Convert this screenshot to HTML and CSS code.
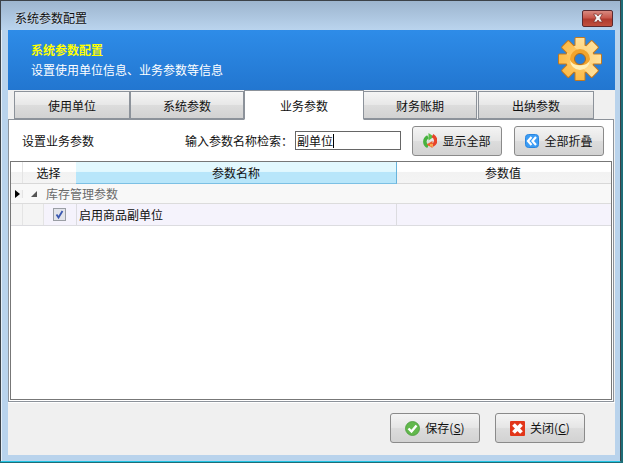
FILE: index.html
```html
<!DOCTYPE html>
<html lang="zh">
<head>
<meta charset="utf-8">
<title>系统参数配置</title>
<link rel="stylesheet" href="styles.css">
</head>
<body>
<div class="window">
  <div class="titlebar">
    <span class="title-text">系统参数配置</span>
    <div class="close-btn">
      <svg width="16" height="10" viewBox="0 0 16 10"><path d="M3.500 1h3L8 3l1.500-2h3L10 5l2.500 4h-3L8 7 6.500 9h-3L6 5z" fill="#f2f2f2" stroke="#7a2a22" stroke-width=".7"/></svg>
    </div>
  </div>
  <div class="client">
    <header class="banner">
      <div class="banner-text">
        <div class="banner-title">系统参数配置</div>
        <div class="banner-sub">设置使用单位信息、业务参数等信息</div>
      </div>
      <svg class="gear" width="44" height="44" viewBox="0 0 44 44">
        <defs>
          <linearGradient id="gearFill" x1="0" y1="0" x2="0" y2="1"><stop offset="0" stop-color="#ffe09a"/><stop offset="1" stop-color="#fdbb48"/></linearGradient>
          <g id="gearShape">
            <circle cx="22" cy="22" r="14"/>
            <rect x="17.500" y="1" width="9" height="42" rx=".5"/>
            <rect x="17.500" y="1" width="9" height="42" rx=".5" transform="rotate(45 22 22)"/>
            <rect x="17.500" y="1" width="9" height="42" rx=".5" transform="rotate(90 22 22)"/>
            <rect x="17.500" y="1" width="9" height="42" rx=".5" transform="rotate(135 22 22)"/>
          </g>
        </defs>
        <use href="#gearShape" fill="#c4781c" stroke="#c4781c" stroke-width="2"/>
        <use href="#gearShape" fill="url(#gearFill)"/>
        <circle cx="22" cy="22" r="10" fill="#f2a42c"/>
        <path d="M12 23a10 10 0 0 0 20 0a10.500 7.500 0 0 1-20 0z" fill="#fff0b8"/>
        <circle cx="22" cy="22" r="5.500" fill="#2a80d8" stroke="#b86c14" stroke-width="1"/>
      </svg>
    </header>
    <nav class="tabs">
      <div class="tab tab-first">使用单位</div>
      <div class="tab tab-b">系统参数</div>
      <div class="tab tab-active">业务参数</div>
      <div class="tab tab-d">财务账期</div>
      <div class="tab tab-e">出纳参数</div>
    </nav>
    <section class="panel">
      <div class="toolbar">
        <span class="toolbar-title">设置业务参数</span>
        <span class="search-label">输入参数名称检索：</span>
        <div class="search-input">副单位<span class="caret"></span></div>
        <div class="btn btn-show">
          <svg width="14" height="15" viewBox="0 0 14 15"><path d="M5 13.500C1 11.500.5 6.500 5 3.800" fill="none" stroke="#46b23e" stroke-width="3.400"/><path d="M5.500 0 11 3.800 5.500 7.500z" fill="#58c048"/><path d="M9.500 2.500c4 2.500 4.500 7.500 0 9.700" fill="none" stroke="#e8442a" stroke-width="3.400"/><path d="M9.500 8 3.500 11.500 9.500 15z" fill="#f0602c"/><path d="M7 11h3v2.500H7z" fill="#f8a850"/></svg>
          <span>显示全部</span>
        </div>
        <div class="btn btn-fold">
          <svg width="14" height="14" viewBox="0 0 14 14"><rect x=".5" y=".5" width="13" height="13" rx="3" fill="#3c9cf4" stroke="#2a86e0"/><path d="M6.500 3 3 7l3.500 4M11 3 7.500 7l3.500 4" fill="none" stroke="#fff" stroke-width="2.200"/></svg>
          <span>全部折叠</span>
        </div>
      </div>
      <div class="grid">
        <div class="grid-head">
          <div class="cell-ind head-ind"></div>
          <div class="head-cell head-select">选择</div>
          <div class="head-cell head-name">参数名称</div>
          <div class="head-cell head-value">参数值</div>
        </div>
        <div class="group-row">
          <div class="cell-ind"><svg width="5" height="8" viewBox="0 0 5 8"><path d="M0 0l5 4-5 4z" fill="#000"/></svg></div>
          <svg class="expander" width="8" height="8" viewBox="0 0 8 8"><path d="M7 1v6H1z" fill="#555"/></svg>
          <span class="group-label">库存管理参数</span>
        </div>
        <div class="data-row">
          <div class="cell-ind"></div>
          <div class="cell-indent"></div>
          <div class="cell-check">
            <svg width="13" height="13" viewBox="0 0 13 13"><rect x=".5" y=".5" width="12" height="12" fill="#e2e4ea" stroke="#9a9ea4"/><path d="M3.500 6.500 5.500 9.500 9.500 3" fill="none" stroke="#3a58b0" stroke-width="1.800"/></svg>
          </div>
          <div class="cell-name">启用商品副单位</div>
          <div class="cell-value"></div>
        </div>
      </div>
    </section>
    <footer class="footer">
      <div class="btn btn-save">
        <svg width="15" height="15" viewBox="0 0 15 15"><circle cx="7.500" cy="7.500" r="7" fill="#62b84c" stroke="#4a9a3c" stroke-width=".8"/><path d="M3.500 7.500 6.500 10.500 11.500 4.500" fill="none" stroke="#fff" stroke-width="2.400"/></svg>
        <span>保存(<u>S</u>)</span>
      </div>
      <div class="btn btn-close">
        <svg width="15" height="15" viewBox="0 0 15 15"><rect width="15" height="15" rx="1" fill="#e2361a"/><path d="M3.500 3.500l8 8M11.500 3.500l-8 8" stroke="#fff" stroke-width="3.800"/></svg>
        <span>关闭(<u>C</u>)</span>
      </div>
    </footer>
  </div>
</div>
</body>
</html>
```
FILE: styles.css
```css
* { box-sizing: border-box; }
html, body { margin: 0; padding: 0; background: #1e6e78; }
body {
  width: 623px;
  height: 463px;
  overflow: hidden;
  font: 12px/16px "Noto Sans CJK SC", "Liberation Sans", sans-serif;
  color: #111;
}
.window {
  width: 621px;
  height: 462px;
  background: #b9d3ec;
  border: 1px solid #3c4248;
  border-bottom: 1px solid #22c4e4;
  padding: 0 5px 6px 7px;
  box-shadow: inset 1px 0 0 #e4eef8;
  display: flex;
  flex-direction: column;
}
.titlebar {
  height: 29px;
  margin: 0 -5px 0 -7px;
  padding: 0 7px 0 14px;
  background: linear-gradient(#9db5ce, #bad4ee);
  display: flex;
  align-items: center;
  justify-content: space-between;
}
.title-text { color: #101010; font-size: 12px; text-shadow: 0 0 3px #e8f0f8; margin-top: 5px; }
.close-btn {
  width: 31px;
  height: 17px;
  margin-top: 5px;
  border: 1px solid #5a2a30;
  border-radius: 2px;
  background: linear-gradient(#d88a80 0, #c8584c 45%, #b03a2e 55%, #c0503e 100%);
  display: flex;
  align-items: center;
  justify-content: center;
}
.client {
  flex: 1;
  display: flex;
  flex-direction: column;
  background: #f0f0f0;
  min-height: 0;
}
.banner {
  height: 60px;
  flex: none;
  padding: 0 13px 0 23px;
  background: linear-gradient(#2e8ce8, #2276d0);
  display: flex;
  align-items: center;
  justify-content: space-between;
}
.banner-title { color: #ffff00; font-size: 12px; line-height: 20px; font-weight: 700; margin-top: -1px; }
.banner-sub { color: #fff; font-size: 12px; line-height: 20px; }
.gear { flex: none; margin-top: -2px; }
.tabs {
  height: 29px;
  flex: none;
  display: flex;
  align-items: flex-end;
  padding-left: 6px;
  position: relative;
  z-index: 1;
}
.tab {
  height: 28px;
  border: 1px solid #8c929a;
  background: linear-gradient(#f5f5f5 0, #e8e8e8 48%, #dcdcdc 52%, #d2d2d2 100%);
  display: flex;
  align-items: center;
  justify-content: center;
  text-align: center;
  padding-top: 2px;
}
.tab-first { width: 116px; }
.tab-b { width: 114px; }
.tab-active {
  width: 120px;
  height: 30px;
  background: #fff;
  border-bottom: 1px solid #fff;
  margin-bottom: -1px;
}
.tab-d { width: 113px; border-left: 0; }
.tab-e { width: 116px; margin-left: 1px; }
.panel {
  height: 283px;
  flex: none;
  width: 606px;
  border: 1px solid #8c929a;
  background: #fff;
  padding: 0 1px;
  display: flex;
  flex-direction: column;
}
.toolbar {
  height: 41px;
  flex: none;
  display: flex;
  align-items: center;
  padding-left: 12px;
}
.toolbar-title { width: 163px; }
.search-label { width: 110px; }
.search-input {
  width: 106px;
  height: 19px;
  border: 1px solid #666;
  background: #fff;
  line-height: 17px;
  padding-left: 1px;
  display: flex;
  align-items: center;
  margin-right: 11px;
}
.caret { width: 1px; height: 14px; background: #000; }
.btn {
  width: 90px;
  height: 30px;
  border: 1px solid #8a8a8a;
  border-radius: 3px;
  background: linear-gradient(#f4f4f4 0, #e6e6e6 48%, #dcdcdc 52%, #d2d2d2 100%);
  display: flex;
  align-items: center;
  justify-content: center;
  gap: 5px;
  flex: none;
}
.btn-show { margin-right: 12px; }
.grid {
  flex: 1;
  border: 1px solid #777;
  margin-bottom: 1px;
  display: flex;
  flex-direction: column;
  background: #fff;
}
.grid-head {
  height: 22px;
  flex: none;
  display: flex;
  border-bottom: 1px solid #d8d8d8;
  background: linear-gradient(#fff 0, #fff 45%, #f2f2f2 50%, #f4f4f4 100%);
}
.cell-ind {
  width: 12px;
  flex: none;
  border-right: 1px solid #e4e4e4;
  display: flex;
  align-items: center;
  padding-left: 4px;
  background: #f4f4f4;
}
.head-ind { background: transparent; }
.head-cell {
  text-align: center;
  line-height: 21px;
}
.head-select { width: 53px; flex: none; padding-right: 2px; }
.head-name {
  width: 321px;
  flex: none;
  background: linear-gradient(#e2f8fe 0, #e2f8fe 45%, #b8e6fa 50%, #b8e6fa 100%);
  border-bottom: 1px solid #7cc0e4;
  border-right: 1px solid #68b4dc;
  height: 22px;
}
.head-value { flex: 1; padding-right: 2px; }
.group-row {
  height: 20px;
  flex: none;
  display: flex;
  align-items: center;
  background: #f8f8f8;
  border-bottom: 1px solid #dcdcdc;
  color: #6a6a6a;
}
.expander { margin: 0 8px 0 7px; }
.data-row {
  height: 22px;
  flex: none;
  display: flex;
  background: #f5f3fc;
  border-bottom: 1px solid #dcdce0;
}
.cell-indent { width: 21px; flex: none; background: #f4f4f4; border-right: 1px solid #e4e4e4; }
.cell-check {
  width: 33px;
  flex: none;
  border-right: 1px solid #dcdce0;
  display: flex;
  align-items: center;
  justify-content: center;
  padding-right: 1px;
}
.cell-name {
  width: 320px;
  flex: none;
  border-right: 1px solid #dcdce0;
  line-height: 21px;
  padding-left: 2px;
}
.cell-value { flex: 1; }
.footer {
  flex: 1;
  border-top: 1px solid #fff;
  display: flex;
  justify-content: flex-end;
  align-items: flex-start;
  padding: 10px 30px 0 0;
  gap: 15px;
}
```
